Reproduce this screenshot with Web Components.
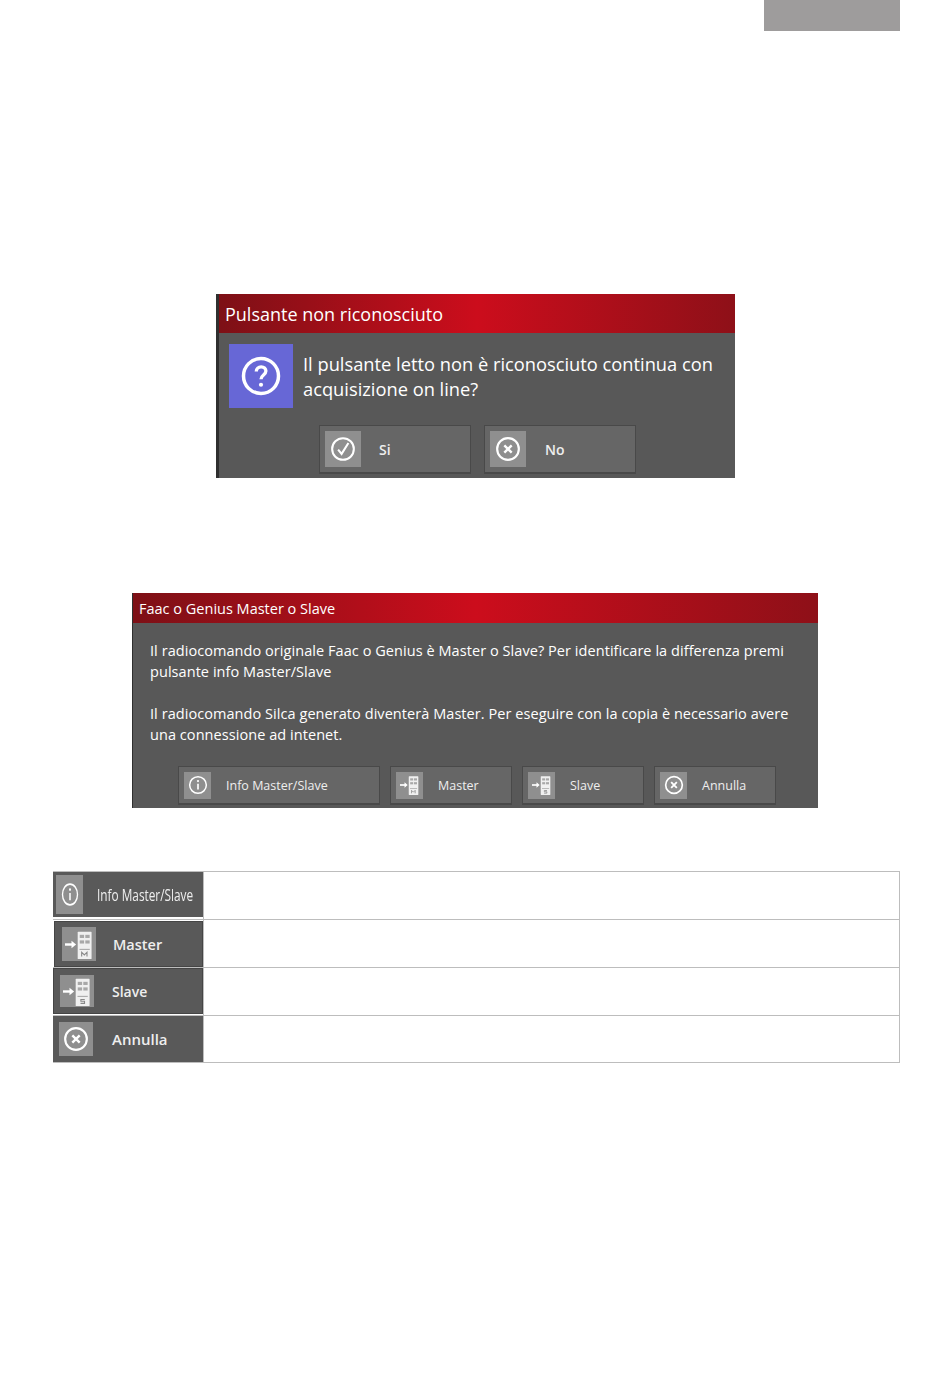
<!DOCTYPE html>
<html lang="it">

<head>
    <meta charset="UTF-8">
    <title>Faac o Genius Master o Slave</title>
    <style>
        html, body { margin: 0; background: #fff; }
        body { font-family: "Open Sans", "Liberation Sans", sans-serif; }
        .top-tab { display: block; width: 136px; height: 31px; margin-left: 764px; background: #9e9c9c; }
        #d1 { margin: 263px 0 0 216px; }
        #d2 { margin: 115px 0 0 132px; }
        legend-table { margin: 63px 0 0 53px; }
    </style>
</head>

<body>
    <div class="top-tab"></div>

    <app-dialog id="d1" heading="Pulsante non riconosciuto" size="lg">
        <div class="ask">
            <svg-icon name="question" style="--box:64px;--icon:42px;--bg:#6767d6;"></svg-icon>
            <p>Il pulsante letto non è riconosciuto continua con acquisizione on line?</p>
        </div>
        <dialog-button slot="buttons" icon="check" label="Si" style="--w:152px;--h:49px;--box:36px;--icon:26px;--gap:18px;--pad:5px;--fs:14px;--fw:600"></dialog-button>
        <dialog-button slot="buttons" icon="cross" label="No" style="--w:152px;--h:49px;--box:36px;--icon:26px;--gap:19px;--pad:5px;--fs:14px;--fw:600"></dialog-button>
    </app-dialog>

    <app-dialog id="d2" heading="Faac o Genius Master o Slave" size="sm">
        <div class="msg">
            <p>Il radiocomando originale Faac o Genius è Master o Slave? Per identificare la differenza premi pulsante info Master/Slave</p>
            <p>Il radiocomando Silca generato diventerà Master. Per eseguire con la copia è necessario avere una connessione ad intenet.</p>
        </div>
        <dialog-button slot="buttons" icon="info" label="Info Master/Slave" style="--w:202px"></dialog-button>
        <dialog-button slot="buttons" icon="master" label="Master"></dialog-button>
        <dialog-button slot="buttons" icon="slave" label="Slave"></dialog-button>
        <dialog-button slot="buttons" icon="cross" label="Annulla"></dialog-button>
    </app-dialog>

    <legend-table>
        <legend-row icon="info" label="Info Master/Slave" style="--pad:2px;--box:27px;--boxh:39px;--icon:25px;--iconw:18px;--gap:14px;--fs:17px;--sx:.695;--mt:0;--mb:2px;--edge:#595959"></legend-row>
        <legend-row icon="master" label="Master" style="--pad:7px;--box:34px;--icon:29px;--gap:17px;--fs:14.5px;--fw:600;--mt:1px;--mb:0;--ml:1px;--edge:#454545"></legend-row>
        <legend-row icon="slave" label="Slave" style="--pad:6px;--box:34px;--boxh:32px;--icon:29px;--gap:18px;--fs:14px;--fw:600;--mt:0;--mb:1px;--edge:#454545"></legend-row>
        <legend-row icon="cross" label="Annulla" style="--pad:5px;--box:34px;--icon:26px;--gap:19px;--fs:15px;--fw:600;--mt:0;--mb:0;--edge:#595959"></legend-row>
    </legend-table>

    <script>
        const ICONS = {
            question: `<circle cx="12" cy="12" r="10" fill="none" stroke="#fff" stroke-width="2"/>
                <path d="M9.3 9.4c0-1.6 1.2-2.6 2.8-2.6s2.7 1 2.7 2.4c0 2.2-2.8 2.2-2.8 4.6" fill="none" stroke="#fff" stroke-width="1.9"/>
                <circle cx="12" cy="17" r="1.2" fill="#fff"/>`,
            check: `<circle cx="12" cy="12" r="10" fill="none" stroke="#fff" stroke-width="1.9"/>
                <path d="M7.5 12.5l3.2 4L17 6.5" fill="none" stroke="#fff" stroke-width="1.9"/>`,
            cross: `<circle cx="12" cy="12" r="10" fill="none" stroke="#fff" stroke-width="2"/>
                <path d="M8.6 8.6l6.8 6.8M15.4 8.6l-6.8 6.8" fill="none" stroke="#fff" stroke-width="2.2"/>`,
            info: `<circle cx="12" cy="12" r="10" fill="none" stroke="#fff" stroke-width="1.8"/>
                <path d="M12 10.5v7" fill="none" stroke="#fff" stroke-width="2"/>
                <circle cx="12" cy="7.3" r="1.3" fill="#fff"/>`,
            master: remoteIcon('M'),
            slave: remoteIcon('S')
        };

        // small remote with an arrow in front of it
        function remoteIcon(letter) {
            const foot = letter === 'M'
                ? '<path d="M13.8 22v-3.6l2.2 2.2 2.2-2.2V22" fill="none" stroke="#888" stroke-width=".9"/>'
                : '<path d="M18 18.6h-3.2v1.5h3v1.7h-3.3" fill="none" stroke="#888" stroke-width=".9"/>';
            return `<path d="M0 12h6" stroke="#fff" stroke-width="2"/><path d="M5.4 8.8L9.2 12l-3.8 3.2z" fill="#fff"/>
                <rect x="10.5" y="1.5" width="11.5" height="22.5" rx=".5" fill="#f0f0f0"/>
                <g fill="#a8a8a8"><rect x="12.2" y="4" width="3.6" height="2.6"/><rect x="16.8" y="4" width="3.6" height="2.6"/>
                <rect x="12.2" y="8.6" width="3.6" height="2.6"/><rect x="16.8" y="8.6" width="3.6" height="2.6"/>
                <rect x="12" y="15.6" width="8.5" height=".9"/></g>${foot}`;
        }

        class SvgIcon extends HTMLElement {
            constructor() {
                super();
                this.attachShadow({ mode: 'open' });
                this.shadowRoot.innerHTML = `
                <style>
                    :host {
                        display: flex;
                        flex: none;
                        align-items: center;
                        justify-content: center;
                        width: var(--box, 27px);
                        height: var(--boxh, var(--box, 27px));
                        background: var(--bg, #8f8f8f);
                    }
                    svg {
                        display: block;
                        width: var(--iconw, var(--icon, 20px));
                        height: var(--icon, 20px);
                        filter: blur(.3px);
                    }
                </style>
                <svg viewBox="0 0 24 24" preserveAspectRatio="none">${ICONS[this.getAttribute('name')]}</svg>`;
            }
        }
        customElements.define('svg-icon', SvgIcon);

        class AppDialog extends HTMLElement {
            constructor() {
                super();
                this.attachShadow({ mode: 'open' });
                const lg = this.getAttribute('size') === 'lg';
                this.shadowRoot.innerHTML = `
                <style>
                    :host {
                        display: block;
                        box-sizing: border-box;
                        width: ${lg ? 519 : 686}px;
                        height: ${lg ? 184 : 215}px;
                        background: #585858;
                        color: #fff;
                        border-left: ${lg ? 3 : 1}px solid #2f2f2f;
                    }
                    .bar {
                        box-sizing: border-box;
                        height: ${lg ? 39 : 30}px;
                        padding: ${lg ? '7px 0 0 6px' : '6px 0 0 6px'};
                        font-size: ${lg ? 18 : 14.5}px;
                        line-height: ${lg ? 27 : 20}px;
                        background: linear-gradient(to right, #7d1016, #cc0d1c 50%, #8e1018);
                        white-space: nowrap;
                    }
                    .buttons {
                        display: flex;
                        gap: ${lg ? 13 : 10}px;
                        margin-left: ${lg ? 100 : 45}px;
                    }
                    .body {
                        height: ${lg ? 92 : 143}px;
                    }
                    ::slotted(.ask) {
                        display: flex;
                        gap: 10px;
                        padding: 11px 0 0 10px;
                        font-size: 18.3px;
                        line-height: 25px;
                    }
                    ::slotted(.msg) {
                        padding: 17px 20px 0 17px;
                        font-size: 14.5px;
                        line-height: 21px;
                        letter-spacing: .06px;
                    }
                </style>
                <div class="bar">${this.getAttribute('heading')}</div>
                <div class="body"><slot></slot></div>
                <div class="buttons"><slot name="buttons"></slot></div>`;
            }
        }
        customElements.define('app-dialog', AppDialog);

        class DialogButton extends HTMLElement {
            constructor() {
                super();
                this.attachShadow({ mode: 'open' });
                this.shadowRoot.innerHTML = `
                <style>
                    :host {
                        display: flex;
                        flex: none;
                        align-items: center;
                        box-sizing: border-box;
                        width: var(--w, 122px);
                        height: var(--h, 39px);
                        padding-left: var(--pad, 5px);
                        gap: var(--gap, 15px);
                        background: #666;
                        border: 1px solid #494949;
                        border-bottom-width: 2px;
                        color: #eee;
                        font-size: var(--fs, 12.5px);
                        font-weight: var(--fw, 400);
                        white-space: nowrap;
                    }
                </style>
                <svg-icon name="${this.getAttribute('icon')}"></svg-icon>
                <span>${this.getAttribute('label')}</span>`;
            }
        }
        customElements.define('dialog-button', DialogButton);

        class LegendTable extends HTMLElement {
            constructor() {
                super();
                this.attachShadow({ mode: 'open' });
                this.shadowRoot.innerHTML = `
                <style>
                    :host {
                        display: block;
                        width: 847px;
                    }
                </style>
                <slot></slot>`;
            }
        }
        customElements.define('legend-table', LegendTable);

        class LegendRow extends HTMLElement {
            constructor() {
                super();
                this.attachShadow({ mode: 'open' });
                this.shadowRoot.innerHTML = `
                <style>
                    :host {
                        display: grid;
                        grid-template-columns: 150px 1fr;
                        box-sizing: border-box;
                        height: 48px;
                        border-top: 1px solid #bdbdbd;
                        border-right: 1px solid #bdbdbd;
                    }
                    :host(:last-child) {
                        border-bottom: 1px solid #bdbdbd;
                    }
                    .thumb {
                        display: flex;
                        align-items: center;
                        box-sizing: border-box;
                        margin: var(--mt, 0) 0 var(--mb, 0) var(--ml, 0);
                        padding-left: var(--pad);
                        gap: var(--gap);
                        background: #595959;
                        border: 1px solid var(--edge, #595959);
                        color: #eee;
                        font-size: var(--fs);
                        font-weight: var(--fw, 400);
                        white-space: nowrap;
                    }
                    span {
                        display: inline-block;
                        transform: scaleX(var(--sx, 1));
                        transform-origin: left center;
                    }
                    .rest {
                        border-left: 1px solid #bdbdbd;
                    }
                </style>
                <div class="thumb">
                    <svg-icon name="${this.getAttribute('icon')}"></svg-icon>
                    <span>${this.getAttribute('label')}</span>
                </div>
                <div class="rest"></div>`;
            }
        }
        customElements.define('legend-row', LegendRow);
    </script>
    <style>
        .ask p { margin: 7px 0 0; width: 430px; }
        .msg p { margin: 0 0 21px; }
    </style>
</body>

</html>
